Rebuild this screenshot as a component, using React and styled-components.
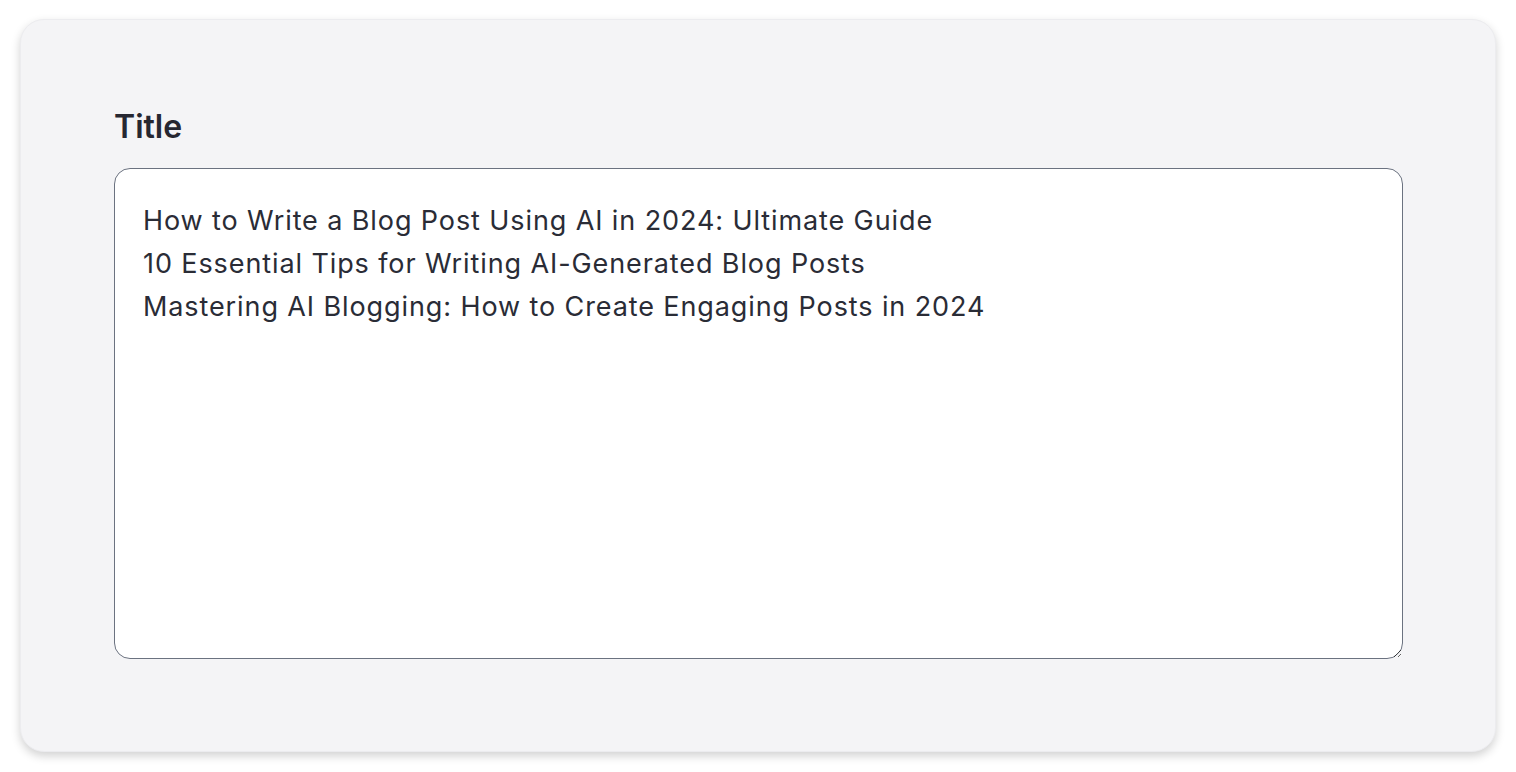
import React from 'react';
import styled, { createGlobalStyle } from 'styled-components';

const GlobalStyle = createGlobalStyle`
    html, body {
        margin: 0;
        padding: 0;
        background: #ffffff;
        font-family: Inter, "Noto Sans", sans-serif;
    }
`;

const Page = styled.div`
    padding: 19px 20px 20px 20px;
    box-sizing: border-box;
    width: 100%;
`;

const Card = styled.section`
    background: #f4f4f6;
    border: 1px solid #ececef;
    border-radius: 24px;
    box-shadow: 0 4px 10px rgba(0, 0, 0, 0.18);
    padding: 87px 92px 92px 93px;
    display: flex;
    flex-flow: column nowrap;
`;

const Label = styled.label`
    font-size: 32px;
    line-height: 40px;
    font-weight: 600;
    color: #262731;
    margin-bottom: 21px;
`;

const TextBox = styled.textarea`
    box-sizing: border-box;
    width: 100%;
    height: 491px;
    margin: 0;
    padding: 30px 28px;
    border: 1px solid #6b7280;
    border-radius: 16px;
    background: #ffffff;
    color: #2a2c36;
    font-family: Inter, "Noto Sans", sans-serif;
    font-size: 27px;
    line-height: 1.6;
    letter-spacing: 0.9px;
    resize: vertical;
    outline: none;
`;

const titles = [
    'How to Write a Blog Post Using AI in 2024: Ultimate Guide',
    '10 Essential Tips for Writing AI-Generated Blog Posts',
    'Mastering AI Blogging: How to Create Engaging Posts in 2024',
];

export default function App() {
    return (
        <>
            <GlobalStyle />
            <Page>
                <Card>
                    <Label htmlFor="title">Title</Label>
                    <TextBox id="title" defaultValue={titles.join('\n')} />
                </Card>
            </Page>
        </>
    );
}
